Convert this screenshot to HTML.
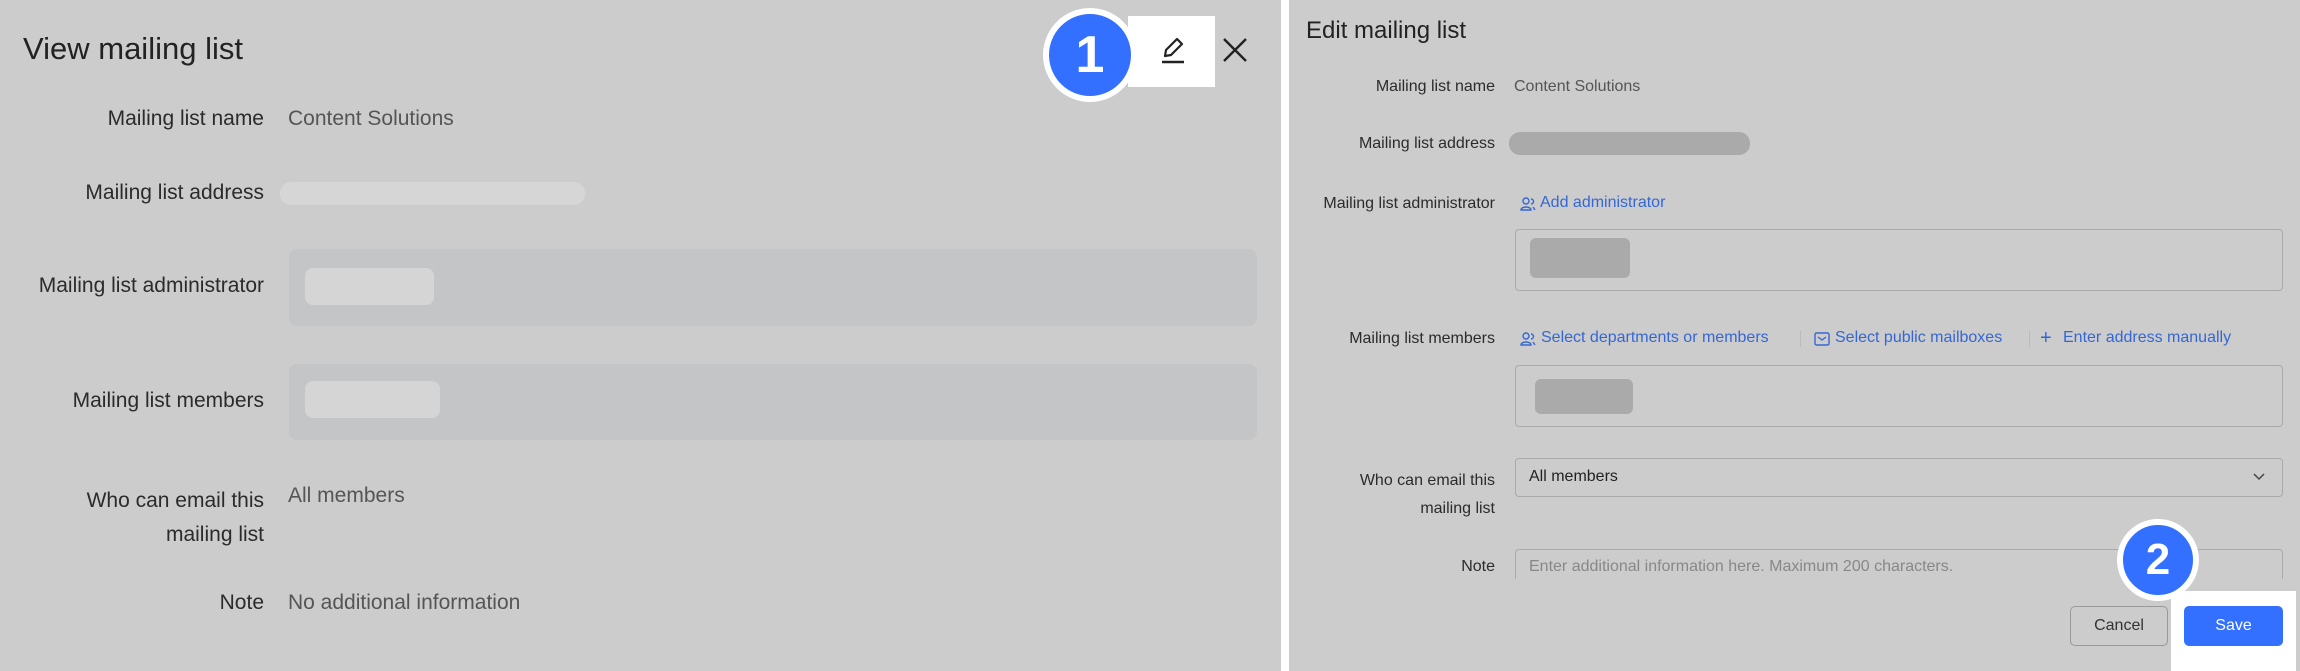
<!DOCTYPE html>
<html><head><meta charset="utf-8"><style>
*{margin:0;padding:0;box-sizing:border-box}
body{width:2300px;height:671px;background:#fff;position:relative;overflow:hidden;font-family:"Liberation Sans",sans-serif}
.p{position:absolute;top:0;height:671px;background:#cccccc}
.a{position:absolute;white-space:nowrap}
.lb{position:absolute;text-align:right;color:#2b2b2b;white-space:nowrap}
.L{font-size:21px;right:2036px}
.R{font-size:16px;right:805px}
.v{color:#555;}
.lk{color:#3567d4;font-size:16px}
.badge{position:absolute;border-radius:50%;background:#3370ff;border:6px solid #fff;color:#fff;font-weight:bold;display:flex;align-items:center;justify-content:center}
.ic{position:absolute}
</style></head><body>
<div class="p" style="left:0;width:1281px"></div>
<div class="p" style="left:1289px;width:1011px"></div>

<!-- left -->
<div class="a" style="left:23px;top:31px;font-size:31px;color:#222">View mailing list</div>
<div class="a" style="left:1128px;top:16px;width:87px;height:71px;background:#fff"></div>
<svg class="a" style="left:1158px;top:34px" width="30" height="32" viewBox="0 0 30 32"><path d="M7 22 L8 16 L19 5 L24 10 L13 21 Z" fill="none" stroke="#222" stroke-width="2.2" stroke-linejoin="round"/><path d="M4 28 H26" stroke="#222" stroke-width="2.5"/></svg>
<svg class="a" style="left:1222px;top:37px" width="26" height="26" viewBox="0 0 26 26"><path d="M2 2 L24 24 M24 2 L2 24" stroke="#222" stroke-width="2.4"/></svg>
<div class="badge" style="left:1043px;top:8px;width:94px;height:94px;font-size:52px">1</div>

<div class="lb L" style="top:107px">Mailing list name</div>
<div class="a v" style="left:288px;top:107px;font-size:21px">Content Solutions</div>
<div class="lb L" style="top:181px">Mailing list address</div>
<div class="a" style="left:280px;top:182px;width:305px;height:23px;border-radius:11px;background:#d6d6d6"></div>
<div class="lb L" style="top:274px">Mailing list administrator</div>
<div class="a" style="left:289px;top:249px;width:968px;height:77px;border-radius:8px;background:#c4c5c7"></div>
<div class="a" style="left:305px;top:268px;width:129px;height:37px;border-radius:8px;background:#d5d5d5"></div>
<div class="lb L" style="top:389px">Mailing list members</div>
<div class="a" style="left:289px;top:364px;width:968px;height:76px;border-radius:8px;background:#c4c5c7"></div>
<div class="a" style="left:305px;top:381px;width:135px;height:37px;border-radius:8px;background:#d5d5d5"></div>
<div class="lb L" style="top:484px;line-height:34px">Who can email this<br>mailing list</div>
<div class="a v" style="left:288px;top:484px;font-size:21px;line-height:24px">All members</div>
<div class="lb L" style="top:591px">Note</div>
<div class="a v" style="left:288px;top:591px;font-size:21px">No additional information</div>

<!-- right -->
<div class="a" style="left:1306px;top:17px;font-size:24px;color:#222">Edit mailing list</div>
<div class="lb R" style="top:78px">Mailing list name</div>
<div class="a v" style="left:1514px;top:78px;font-size:16px">Content Solutions</div>
<div class="lb R" style="top:135px">Mailing list address</div>
<div class="a" style="left:1509px;top:132px;width:241px;height:23px;border-radius:11px;background:#aaa"></div>
<div class="lb R" style="top:195px">Mailing list administrator</div>
<svg class="ic" style="left:1520px;top:196px" width="16" height="16" viewBox="0 0 16 16"><circle cx="6" cy="5" r="3" fill="none" stroke="#3567d4" stroke-width="1.4"/><path d="M1 14 C1 10 11 10 11 14 Z" fill="none" stroke="#3567d4" stroke-width="1.4"/><path d="M11 3 A2.5 2.5 0 0 1 11 8 M13 11 L15 14" fill="none" stroke="#3567d4" stroke-width="1.4"/></svg>
<div class="a lk" style="left:1540px;top:194px">Add administrator</div>
<div class="a" style="left:1515px;top:229px;width:768px;height:62px;border:1.5px solid #aaa;border-radius:4px"></div>
<div class="a" style="left:1530px;top:238px;width:100px;height:40px;border-radius:6px;background:#aaa"></div>
<div class="lb R" style="top:330px">Mailing list members</div>
<svg class="ic" style="left:1520px;top:331px" width="16" height="16" viewBox="0 0 16 16"><circle cx="6" cy="5" r="3" fill="none" stroke="#3567d4" stroke-width="1.4"/><path d="M1 14 C1 10 11 10 11 14 Z" fill="none" stroke="#3567d4" stroke-width="1.4"/><path d="M11 3 A2.5 2.5 0 0 1 11 8 M13 11 L15 14" fill="none" stroke="#3567d4" stroke-width="1.4"/></svg>
<div class="a lk" style="left:1541px;top:329px">Select departments or members</div>
<div class="a" style="left:1800px;top:331px;width:1px;height:16px;background:#bbb"></div>
<svg class="ic" style="left:1814px;top:332px" width="16" height="14" viewBox="0 0 16 14"><rect x="1" y="1" width="14" height="12" rx="1.5" fill="none" stroke="#3567d4" stroke-width="1.4"/><path d="M4 5 L8 8 L12 5" fill="none" stroke="#3567d4" stroke-width="1.4"/></svg>
<div class="a lk" style="left:1835px;top:329px">Select public mailboxes</div>
<div class="a" style="left:2029px;top:331px;width:1px;height:16px;background:#bbb"></div>
<div class="a lk" style="left:2040px;top:327px;font-size:20px">+</div>
<div class="a lk" style="left:2063px;top:329px">Enter address manually</div>
<div class="a" style="left:1515px;top:365px;width:768px;height:62px;border:1.5px solid #aaa;border-radius:4px"></div>
<div class="a" style="left:1535px;top:379px;width:98px;height:35px;border-radius:6px;background:#aaa"></div>
<div class="lb R" style="top:467px;line-height:28px">Who can email this<br>mailing list</div>
<div class="a" style="left:1515px;top:458px;width:768px;height:39px;border:1.5px solid #aaa;border-radius:4px"></div>
<div class="a" style="left:1529px;top:468px;font-size:16px;color:#222">All members</div>
<svg class="a" style="left:2253px;top:472px" width="12" height="10" viewBox="0 0 12 10"><path d="M1 2 L6 7 L11 2" fill="none" stroke="#444" stroke-width="1.5"/></svg>
<div class="lb R" style="top:558px">Note</div>
<div class="a" style="left:1515px;top:549px;width:768px;height:30px;border:1.5px solid #aaa;border-bottom:none;border-radius:4px 4px 0 0"></div>
<div class="a" style="left:1529px;top:558px;font-size:16px;color:#888">Enter additional information here. Maximum 200 characters.</div>
<div class="a" style="left:2171px;top:591px;width:125px;height:80px;background:#fff"></div>
<div class="a" style="left:2070px;top:606px;width:98px;height:40px;border:1.5px solid #999;border-radius:5px;background:#ccc;font-size:16px;color:#333;text-align:center;line-height:37px">Cancel</div>
<div class="a" style="left:2184px;top:606px;width:99px;height:40px;border-radius:5px;background:#3370ff;font-size:16px;color:#fff;text-align:center;line-height:40px">Save</div>
<div class="badge" style="left:2117px;top:519px;width:82px;height:82px;font-size:44px">2</div>
</body></html>
